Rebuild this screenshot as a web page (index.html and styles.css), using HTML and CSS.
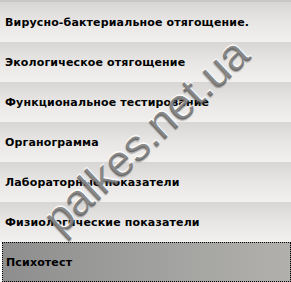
FILE: index.html
```html
<!DOCTYPE html>
<html>
<head>
<meta charset="utf-8">
<link rel="stylesheet" href="styles.css">
</head>
<body>
<div class="menu">
  <div class="item">Вирусно-бактериальное отягощение.</div>
  <div class="item">Экологическое отягощение</div>
  <div class="item">Функциональное тестирование</div>
  <div class="item">Органограмма</div>
  <div class="item">Лабораторные показатели</div>
  <div class="item">Физиологические показатели</div>
  <div class="item active">Психотест</div>
  <div class="watermark">palkes.net.ua</div>
</div>
</body>
</html>
```
FILE: styles.css
```css
html, body {
  margin: 0;
  padding: 0;
  background: #ffffff;
}
.menu {
  position: relative;
  width: 291px;
  height: 282px;
  overflow: hidden;
  border-top: 2px solid #c9c8c6;
  box-sizing: border-box;
  display: flex;
  flex-direction: column;
}
.item {
  height: 40px;
  flex: none;
  display: flex;
  align-items: center;
  padding-left: 5px;
  font-family: "DejaVu Sans", Verdana, sans-serif;
  font-weight: bold;
  font-size: 11px;
  letter-spacing: 0.15px;
  color: #000;
  background: linear-gradient(to bottom, #d7d6d4 0%, #e6e5e3 45%, #f1f0ee 100%);
  box-sizing: border-box;
}
.item.active {
  background: linear-gradient(to right, #8e8e8e 0%, #a3a3a1 60%, #b1b0ac 100%);
  border: 1px dotted #000;
  margin-left: 2px;
  padding-left: 3px;
}
.watermark {
  position: absolute;
  left: 1px;
  top: 112px;
  width: 290px;
  line-height: 44px;
  text-align: center;
  font-family: "Liberation Sans", Arial, sans-serif;
  font-size: 44px;
  color: rgba(70, 70, 70, 0.65);
  text-shadow: 1px -1px 1px rgba(255,255,255,0.9), -1px 1px 1px rgba(40,40,40,0.35);
  transform: rotate(-43deg);
  transform-origin: center center;
  white-space: nowrap;
  pointer-events: none;
}
```
